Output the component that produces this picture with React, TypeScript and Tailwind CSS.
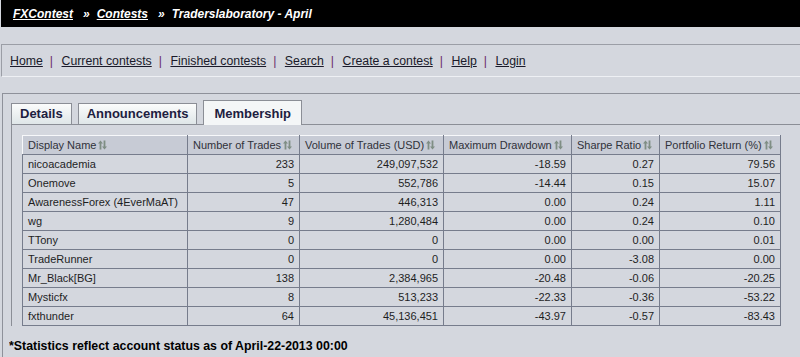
import React from "react";

const rows = [
  ["nicoacademia", "233", "249,097,532", "-18.59", "0.27", "79.56"],
  ["Onemove", "5", "552,786", "-14.44", "0.15", "15.07"],
  ["AwarenessForex (4EverMaAT)", "47", "446,313", "0.00", "0.24", "1.11"],
  ["wg", "9", "1,280,484", "0.00", "0.24", "0.10"],
  ["TTony", "0", "0", "0.00", "0.00", "0.01"],
  ["TradeRunner", "0", "0", "0.00", "-3.08", "0.00"],
  ["Mr_Black[BG]", "138", "2,384,965", "-20.48", "-0.06", "-20.25"],
  ["Mysticfx", "8", "513,233", "-22.33", "-0.36", "-53.22"],
  ["fxthunder", "64", "45,136,451", "-43.97", "-0.57", "-83.43"],
];

const columns = [
  { label: "Display Name", w: "w-[165px]" },
  { label: "Number of Trades", w: "w-[112px]" },
  { label: "Volume of Trades (USD)", w: "w-[144px]" },
  { label: "Maximum Drawdown", w: "w-[128px]" },
  { label: "Sharpe Ratio", w: "w-[88px]" },
  { label: "Portfolio Return (%)", w: "w-[121px]" },
];

function SortIcon() {
  return (
    <svg width="9" height="10" viewBox="0 0 9 10" className="ml-[2px] inline-block">
      <path d="M2.5 0.5 L0 3.5 H1.6 V9.5 H3.4 V3.5 H5 Z" fill="#7f8e84" />
      <path d="M6.5 9.5 L4 6.5 H5.6 V0.5 H7.4 V6.5 H9 Z" fill="#7f8e84" />
    </svg>
  );
}

const navLinks = ["Home", "Current contests", "Finished contests", "Search", "Create a contest", "Help", "Login"];

export default function App() {
  return (
    <div className="w-[800px] h-[357px] overflow-hidden bg-[#d4d7de] font-['Liberation_Sans',Arial,sans-serif]">
      {/* Breadcrumb bar */}
      <div className="ml-[1px] h-[27px] bg-black flex items-center pl-[12px] text-white text-[12px] font-bold italic">
        <a href="#" className="underline">FXContest</a>
        <span className="ml-[10px] mr-[7px]">»</span>
        <a href="#" className="underline">Contests</a>
        <span className="ml-[10px] mr-[7px]">»</span>
        <span>Traderslaboratory - April</span>
      </div>

      {/* Nav */}
      <div className="mt-[17px] ml-[1px] h-[33px] border-t border-l border-[#9b9ea6] border-b border-b-[#eef0f4] flex items-center pl-[8px] pt-[1px] text-[12.3px] text-[#1a1a2a]">
        {navLinks.map((l, i) => (
          <React.Fragment key={l}>
            <a href="#" className="underline">{l}</a>
            {i < navLinks.length - 1 && <span className="ml-[7px] mr-[8.5px] text-[#6b2d6b]">|</span>}
          </React.Fragment>
        ))}
      </div>

      {/* Contest box */}
      <div className="mt-[16px] ml-[2px] h-[300px] border-t border-l border-[#8e919a] pt-[6px]">
        <div className="flex items-end gap-[6px] pl-[8px] h-[24px]">
          <div className="h-[21px] px-[8px] border border-b-0 border-[#8b8e96] bg-gradient-to-b from-[#fbfcfc] to-[#dfe6e8] text-[13px] font-bold text-[#1d2040] flex items-center">Details</div>
          <div className="h-[21px] px-[8px] border border-b-0 border-[#8b8e96] bg-gradient-to-b from-[#fbfcfc] to-[#dfe6e8] text-[13px] font-bold text-[#1d2040] flex items-center">Announcements</div>
          <div className="h-[25px] -mb-[1px] px-[10px] pt-[2px] border border-b-0 border-[#8b8e96] bg-[#f4f6f7] text-[13px] font-bold text-[#1d2040] flex items-center relative">Membership</div>
        </div>
        <div className="ml-[8px] border-t border-l border-[#8b8e96] pt-[10px] pl-[10px]">
          <table className="border-collapse text-[11px] text-[#1e1e1e]">
            <thead>
              <tr className="bg-[#c7cbd5] h-[19px]">
                {columns.map((c, i) => (
                  <th
                    key={c.label}
                    className={`${c.w} font-normal text-left text-[#30323a] px-[5px] border-x border-b border-[#767c8c] border-t border-t-[#f7f8fa] ${i === 0 ? "border-l-[#f7f8fa]" : ""}`}
                  >
                    <span className="inline-flex items-center">
                      {c.label}
                      <SortIcon />
                    </span>
                  </th>
                ))}
              </tr>
            </thead>
            <tbody>
              {rows.map((r) => (
                <tr key={r[0]} className="h-[19px]">
                  {r.map((v, i) => (
                    <td
                      key={i}
                      className={`border border-[#767c8c] px-[5px] ${i === 0 ? "text-left" : "text-right"}`}
                    >
                      {v}
                    </td>
                  ))}
                </tr>
              ))}
            </tbody>
          </table>
        </div>
        <div className="mt-[10px] ml-[6px] text-[13px] font-bold text-black scale-x-[0.95] origin-left whitespace-nowrap">
          *Statistics reflect account status as of April-22-2013 00:00
        </div>
      </div>
    </div>
  );
}
